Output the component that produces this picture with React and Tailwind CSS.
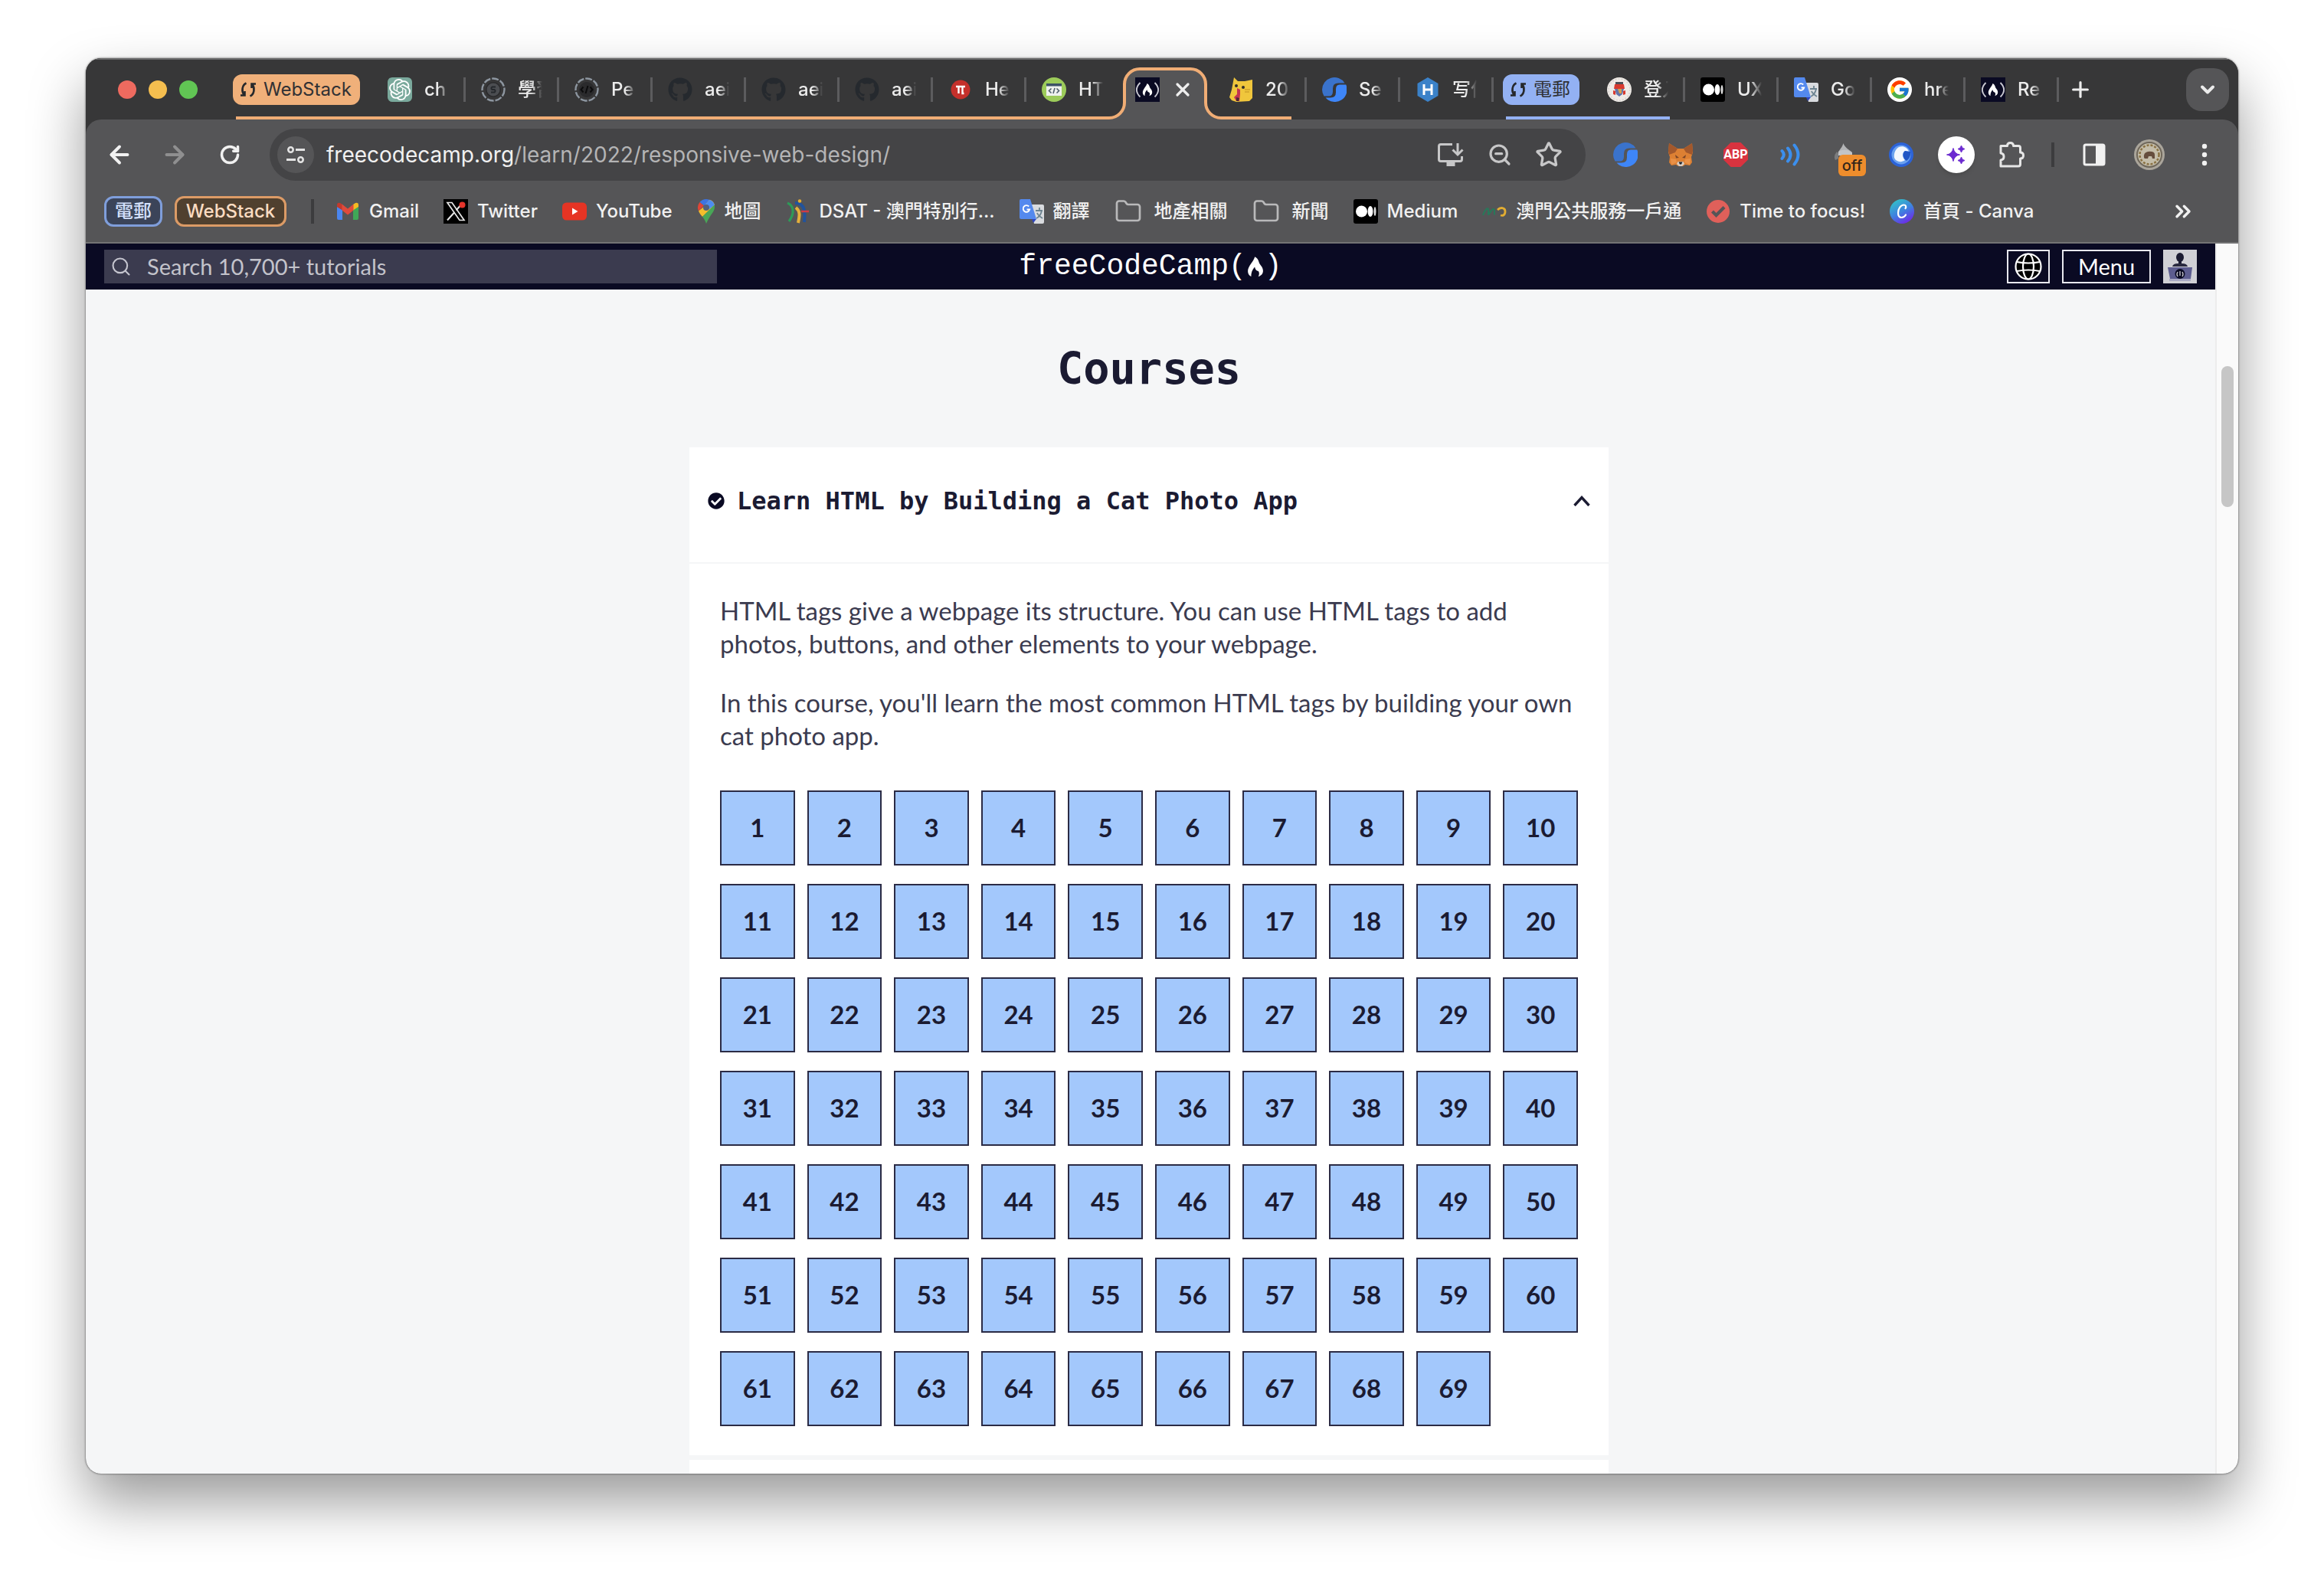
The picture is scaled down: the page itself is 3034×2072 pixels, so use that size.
import React from "react";
import { ArrowLeft, ArrowRight, RotateCw, Search, Star, Plus, X, ChevronDown, Folder, ChevronsRight, ZoomOut } from "lucide-react";
import { FaGithub, FaCheckCircle } from "react-icons/fa";
import { FcGoogle } from "react-icons/fc";
import { SiOpenai } from "react-icons/si";

/* ---------- small drawings ---------- */

const Svg = ({ size = "size-8", box = "0 0 32 32", children }) => (
  <svg viewBox={box} className={`${size} shrink-0`} fill="none" aria-hidden="true">
    {children}
  </svg>
);

const FLAME = "M15.5 8C14.5 12 9.800 15.500 9.800 19.800c0 2.200 1.200 3.700 2.700 4.400-.2-2.600.8-5.700 2.900-7.900.5 2.200 1.400 3.200 3 3.400 1 1.200.7 3.200-.1 4.500 2.300-.7 3.900-2.300 3.900-4.800 0-3.400-2.800-4.700-3.400-7.200C18.400 10.400 17.300 8.800 15.500 8z";

const ChatIcon = () => (
  <span className="flex size-8 shrink-0 items-center justify-center rounded-md bg-[#7aa99c]">
    <SiOpenai className="size-7 text-white" />
  </span>
);

const RingIcon = ({ children }) => (
  <Svg>
    <circle cx="16" cy="16" r="14.500" stroke="#8d96a0" strokeWidth="2.400" strokeDasharray="9 2" />
    <circle cx="16" cy="16" r="10" fill="#2a2a2c" />
    {children}
  </Svg>
);
const RingS = () => (
  <RingIcon>
    <circle cx="16" cy="16" r="8.500" fill="#4b4d51" />
    <path d="M19 12.500h-4.500a2 2 0 0 0 0 3.500h3a2 2 0 0 1 0 3.500H13" stroke="#25282c" strokeWidth="2" />
  </RingIcon>
);
const RingCode = () => (
  <RingIcon>
    <path d="M11.500 12.500 8.500 16l3 3.500M20.500 12.500l3 3.500-3 3.500M17.500 11l-3 10" stroke="#0c0c0d" strokeWidth="2" />
  </RingIcon>
);
const GithubIcon = () => <FaGithub className="size-8 shrink-0 text-[#25292e]" />;
const PiIcon = () => (
  <Svg>
    <circle cx="16" cy="16" r="12.500" fill="#c4302b" />
    <path d="M10 12h12M13.500 12v9M18.500 12v9h2" stroke="#fff" strokeWidth="2.400" />
  </Svg>
);
const HtmlIcon = () => (
  <Svg>
    <circle cx="16" cy="16" r="16" fill="#9ccb5a" />
    <path d="M6 8h20v16H6z" fill="#eef1ee" />
    <path d="M6 8h20v3.500H6z" fill="#3d5266" />
    <path d="m12.500 14.500-3 3 3 3M19.500 14.500l3 3-3 3M17 14l-2 7" stroke="#51606d" strokeWidth="1.600" />
  </Svg>
);
const FccIcon = () => (
  <Svg>
    <path d="M0 0h32v32H0z" fill="#0a0a23" />
    <path d="M6.500 7c-6 6-6 12.500 0 18.500M25.500 7c6 6 6 12.500 0 18.500" stroke="#c9c9d2" strokeWidth="1.800" />
    <path d={FLAME} fill="#fff" />
  </Svg>
);
const CatIcon = () => (
  <Svg>
    <path d="M7 0l5 5h9l10-2v24l-4 4-17 1-6-2-3-4 3-10z" fill="#f0c63c" />
    <circle cx="10" cy="11" r="2" fill="#33302a" />
    <circle cx="19" cy="13" r="2" fill="#33302a" />
    <path d="M11 14l4 2 0 6-1 9h-4l-3-5 4-4z" fill="#c23352" />
    <path d="M10 26l4 1-1 4h-3z" fill="#4b2a35" />
    <path d="M21 16h7M21 19h6" stroke="#cfa22a" strokeWidth="1.500" />
  </Svg>
);
const SIcon = () => (
  <Svg>
    <path d="M0 16A16 16 0 0 1 29.500 7.500H21q-7 0-7 7v4q0 6-5 6H2.500A16 16 0 0 1 0 16z" fill="#3a73cc" />
    <path d="M31.200 9.500A16 16 0 0 1 4.500 26.500H11q7 0 7-7v-4q0-6 5-6z" fill="#3e86f8" />
  </Svg>
);
const HIcon = () => (
  <Svg>
    <path d="M16 0l13.500 8v16L16 32 2.500 24V8z" fill="#3b82c9" />
    <path d="M11 9v14M21 9v14M11 16h10" stroke="#fff" strokeWidth="3" />
  </Svg>
);
const CrestIcon = () => (
  <Svg>
    <circle cx="16" cy="16" r="16" fill="#efebe6" />
    <circle cx="16" cy="16" r="14" stroke="#d8d2d0" strokeWidth="1.500" strokeDasharray="2 2" />
    <path d="M11 6h10v3H11z" fill="#4d4e58" />
    <path d="M10 9h12l1 6H9z" fill="#d8392e" />
    <path d="M10 15h12l-2 7-4 3-4-3z" fill="#6474a8" />
    <path d="M14 15h5v6h-3z" fill="#d6a04e" />
    <path d="M8 17l3 1v5l-3-1zM24 17l-3 1v5l3-1z" fill="#d8392e" />
  </Svg>
);
const MediumIcon = () => (
  <Svg>
    <rect width="32" height="32" rx="3" fill="#000" />
    <circle cx="10.500" cy="16" r="7.500" fill="#fff" />
    <ellipse cx="22" cy="16" rx="3.400" ry="7" fill="#fff" />
    <ellipse cx="28" cy="16" rx="1.500" ry="6" fill="#ddd" />
  </Svg>
);
const TranslateIcon = () => (
  <Svg>
    <path d="M13 7h17q2 0 2 2v21q0 2-2 2H19z" fill="#d9dbdf" />
    <path d="M21 15h9M26 11v4M29 15c-1 5-3 8-7 10M23 18c1 3 4 5 7 7" stroke="#6c8390" strokeWidth="1.800" />
    <path d="M2 0h12l8 26H2q-2 0-2-2V2q0-2 2-2z" fill="#5489ee" />
    <path d="M16 26h6l-4 5z" fill="#2f45c0" />
    <path d="M12.200 9.500a4.300 4.300 0 1 0 1 4H9.500" stroke="#fff" strokeWidth="1.900" />
  </Svg>
);
const GoogleIcon = () => (
  <span className="flex size-8 shrink-0 items-center justify-center rounded-full bg-white">
    <FcGoogle className="size-7" />
  </span>
);
const SavedGroup = () => (
  <Svg size="size-6" box="0 0 24 24">
    <path d="M9.500 3.500C4 6 3 14 6.500 19M2 19.500h5.500V14M14.500 20.500C20 18 21 10 17.500 5M22 4.500h-5.500V10" stroke="#26282b" strokeWidth="2.600" />
  </Svg>
);
const GmailIcon = () => (
  <Svg>
    <path d="M2 10v15q0 2 2 2h5V14z" fill="#4a86f0" />
    <path d="M30 10v15q0 2-2 2h-5V14z" fill="#3fa757" />
    <path d="M2 10V8q0-4 4-3l3 2v7.500z" fill="#c23a2d" />
    <path d="M30 10V8q0-4-4-3l-3 2v7.500z" fill="#f4bb22" />
    <path d="M8.500 6.500 16 12.500l7.500-6v8L16 20.500l-7.500-6z" fill="#e04a3c" />
  </Svg>
);
const XIcon = () => (
  <Svg>
    <path d="M0 0h32v32H0z" fill="#000" />
    <path d="M5 4.500h6L27 27.500h-6z" stroke="#e8e8e8" strokeWidth="1.700" />
    <path d="M25 5l-8.500 9.500M14 17.500l-9 10" stroke="#e8e8e8" strokeWidth="2" />
    <circle cx="24.500" cy="7.500" r="4" fill="#e5342b" />
  </Svg>
);
const YoutubeIcon = () => (
  <Svg>
    <rect y="4.500" width="32" height="23" rx="5.500" fill="#e63424" />
    <path d="M13 11.500v9l7.500-4.500z" fill="#fff" />
  </Svg>
);
const MapsIcon = () => (
  <Svg size="h-8 w-6" box="4 0 24 32">
    <path d="M16 0a11 11 0 0 0-8.500 4l6 5L20 .8A11 11 0 0 0 16 0z" fill="#3e74e0" />
    <path d="M7.500 4A11 11 0 0 0 6 15.500L13 8.500z" fill="#df4637" />
    <path d="M20 .8 12 10.500l-6 5c1 3 3 5 5 7.500L27 7.500C26 4 23.500 1.500 20 .8z" fill="#f3bd2c" />
    <path d="M20 .8c3.500.9 6 3.400 6.800 7L20 13l-7-4z" fill="#4d8cf0" />
    <path d="M26.700 7.500C28 13 25 17 22 21c-2.500 3.500-4 7-6 11-1-3-2.500-6-5-9z" fill="#48a657" />
    <circle cx="16" cy="11" r="4" fill="#53617c" />
  </Svg>
);
const DsatIcon = () => (
  <Svg>
    <path d="M2 5c8 3 10 13 2 24" stroke="#2e9a58" strokeWidth="3.200" />
    <path d="M12 5c14 0 13 14 12 25" stroke="#22539c" strokeWidth="4" />
    <path d="M13 11c6 5 5 10 3 20" stroke="#e5b03c" strokeWidth="4" />
    <circle cx="18" cy="2.500" r="2.200" fill="#e6ad31" />
    <path d="M20 16h10" stroke="#cf3c43" strokeWidth="2.500" />
  </Svg>
);
const FolderIcon = () => <Folder className="mr-1 size-9 shrink-0 text-[#b9b9ba]" strokeWidth={1.800} />;
const MoIcon = () => (
  <Svg>
    <path d="M1 21c3-8 6-10 7-8s-1 6 0 7 4-8 7-7-1 7 2 7" stroke="#27795a" strokeWidth="2" />
    <path d="M20 14c4-4 10-3 10 2s-3 6-6 5" stroke="#e2ad32" strokeWidth="2.800" />
  </Svg>
);
const CheckIcon = () => (
  <Svg>
    <circle cx="16" cy="16" r="15" fill="#e0605a" />
    <path d="M8.500 16l5 5L24 10.500" stroke="#555557" strokeWidth="4.200" />
  </Svg>
);
const CanvaIcon = () => (
  <Svg>
    <defs>
      <linearGradient id="canva" x1="6" y1="2" x2="22" y2="30" gradientUnits="userSpaceOnUse">
        <stop stopColor="#33bfc9" />
        <stop offset=".55" stopColor="#3f7fe0" />
        <stop offset="1" stopColor="#6a31e6" />
      </linearGradient>
    </defs>
    <circle cx="16" cy="16" r="16" fill="url(#canva)" />
    <path d="M20.500 12c1.500-2 .5-4.500-2-4.500-4 0-7.500 5-7.500 10.500 0 4 2 6 4.500 6 2.300 0 4.300-1.500 5.500-3.500" stroke="#fff" strokeWidth="2.200" strokeLinecap="round" />
  </Svg>
);
const TuneIcon = () => (
  <Svg size="size-7" box="0 0 28 28">
    <circle cx="7.500" cy="7.500" r="3.200" stroke="#e3e3e3" strokeWidth="2.600" />
    <path d="M14 7.500h12M2 20.500h12" stroke="#e3e3e3" strokeWidth="2.800" />
    <circle cx="20.500" cy="20.500" r="3.200" stroke="#e3e3e3" strokeWidth="2.600" />
  </Svg>
);
const InstallIcon = () => (
  <Svg size="size-9" box="0 0 36 36">
    <path d="M20 4.500H5q-2.500 0-2.500 2.500v17q0 2.500 2.500 2.500h25q2.500 0 2.500-2.500v-4" stroke="#c7c7c8" strokeWidth="3" />
    <path d="M12.500 28h11v5h-11z" fill="#c7c7c8" />
    <path d="M27 3v14M20.500 11.500 27 18l6.500-6.500" stroke="#c7c7c8" strokeWidth="3" />
  </Svg>
);
const FoxIcon = () => (
  <Svg>
    <path d="M1 1l11 7h8l11-7 1 12-2 6 1 7-3 4-6-1-3 2h-6l-3-2-6 1-3-4 1-7-2-6z" fill="#dd8033" />
    <path d="M1 1l11 7-3 5-8 3-1-5zM31 1 20 8l3 5 8 3 1-5z" fill="#a3582c" />
    <path d="M9 16l5 4-4 .5zM23 16l-5 4 4 .5z" fill="#7d4526" />
    <path d="M3 21l7 1 1 4-7 3z" fill="#ea9147" />
    <path d="M29 21l-7 1-1 4 7 3z" fill="#ea9147" />
    <path d="M12.500 25h7l1.500 3-3 3h-4l-3-3z" fill="#d9ccc0" />
    <path d="M13.500 25.500h5l-1.500 3h-2z" fill="#22242a" />
  </Svg>
);
const AbpIcon = () => (
  <span className="flex size-8 items-center justify-center bg-[#d9333f] font-['Roboto',sans-serif] text-base leading-none font-bold text-white [clip-path:polygon(30%_0,70%_0,100%_30%,100%_70%,70%_100%,30%_100%,0_70%,0_30%)]">
    ABP
  </span>
);
const SoundIcon = () => (
  <Svg>
    <path d="M4.500 11q4.500 5 0 10M12 7.500q7 8.500 0 17M20.500 3.500q10 12.500 0 25" stroke="#3b8fee" strokeWidth="4" strokeLinecap="round" />
  </Svg>
);
const OffIcon = () => (
  <span className="relative block size-8">
    <Svg>
      <path d="M12.500 1c1 4 6 8 11.500 11.500-8-2-14-2-18 1C7 9 11 7 12.500 1z" fill="#b3b4b6" />
      <path d="M6 12c5-3 12-3 18 1v4H6z" fill="#c3c4c6" />
      <path d="M4 12q-5 6-2 11l4-2v-7z" fill="#7b7c7e" />
    </Svg>
    <span className="absolute top-4 left-1.5 flex h-7 w-9 items-center justify-center rounded-md bg-[#ee8d2c] text-xl leading-none font-medium text-[#33261a]">off</span>
  </span>
);
const BirdIcon = () => (
  <Svg>
    <circle cx="16" cy="16" r="16" fill="#2c63d8" />
    <circle cx="16" cy="16" r="12.500" fill="#6aa1ef" />
    <path d="M13 6c5-2 11 0 13 6l-5-1c-4 2-4 8 0 12-5 4-12 2-14-3-1-6 2-12 6-14z" fill="#f3f7fd" />
    <path d="M21 11l7 1c1 5-2 10-5 12-5-3-6-10-2-13z" fill="#2055c4" />
  </Svg>
);
const SparkIcon = () => (
  <span className="flex size-12 items-center justify-center rounded-full bg-white shadow-md">
    <Svg size="size-7" box="0 0 28 28">
      <path d="M10 5.500q1.500 7.500 8.500 8.500-7 1-8.500 8.500Q8.500 15 1.500 14 8.500 13 10 5.500zM20.500 2q.8 4 4.500 4.500-3.700.5-4.500 4.500-.8-4-4.500-4.500 3.700-.5 4.500-4.500zM20.500 17q.8 4 4.500 4.500-3.700.5-4.500 4.500-.8-4-4.500-4.500 3.700-.5 4.500-4.500z" fill="#6c2bd0" stroke="#6c2bd0" strokeWidth="1" />
    </Svg>
  </span>
);
const PuzzleIcon = () => (
  <Svg size="size-9" box="0 0 36 36">
    <path d="M4 6.500h8.500q0-4 4-4t4 4H27q2.500 0 2.500 2.500v6q4 0 4 4t-4 4v7.500q0 2.500-2.500 2.500H4V25q4-.5 4-4.500T4 16z" stroke="#e6e6e6" strokeWidth="3" strokeLinejoin="round" />
  </Svg>
);
const SidePanelIcon = () => (
  <Svg>
    <rect x="3" y="3" width="26" height="26" rx="2" stroke="#f1f1f1" strokeWidth="3" />
    <path d="M18 3h11v26H18z" fill="#f1f1f1" />
  </Svg>
);
const ProfileIcon = () => (
  <Svg size="size-10" box="0 0 40 40">
    <circle cx="20" cy="20" r="20" fill="#aaa59b" />
    <circle cx="20" cy="20" r="16" fill="#c4bda9" stroke="#6f675a" strokeWidth="2" />
    <circle cx="20" cy="20" r="12.500" stroke="#8a7244" strokeWidth="2.500" strokeDasharray="3 2" />
    <path d="M13 24q-1-7 5-8 9-1 9 4v5h-3l-1-3h-4l-1 3h-4z" fill="#664e3d" />
  </Svg>
);
const DotsIcon = () => (
  <Svg>
    <circle cx="16" cy="5" r="3.200" fill="#f1f1f1" />
    <circle cx="16" cy="16" r="3.200" fill="#f1f1f1" />
    <circle cx="16" cy="27" r="3.200" fill="#f1f1f1" />
  </Svg>
);

/* ---------- tab strip ---------- */

const Tab = ({ icon: Icon, title, divider = true }) => (
  <button className="flex h-full w-[122px] shrink-0 items-center pl-5">
    <Icon />
    <span className="ml-4 w-8 overflow-hidden text-left whitespace-nowrap [mask-image:linear-gradient(to_right,#000_55%,transparent)]">{title}</span>
    {divider && <span className="ml-auto h-8 w-[3px] bg-[#5c5c5e]" />}
  </button>
);

const ActiveTab = () => (
  <div className="relative flex h-full w-[122px] shrink-0 items-center pl-5">
    <svg viewBox="0 0 146 80" className="absolute bottom-0 -left-3.5 h-20 w-[146px]" fill="none" aria-hidden="true">
      <path d="M0 78A20 20 0 0 0 20 58V34A20 20 0 0 1 40 14H106A20 20 0 0 1 126 34V58A20 20 0 0 0 146 78V80H0z" fill="#555557" />
      <path d="M0 78A20 20 0 0 0 20 58V34A20 20 0 0 1 40 14H106A20 20 0 0 1 126 34V58A20 20 0 0 0 146 78" stroke="#f0ad75" strokeWidth="4" />
    </svg>
    <span className="relative"><FccIcon /></span>
    <button aria-label="Close tab" className="relative ml-4 flex size-7 items-center justify-center">
      <X className="size-7 text-[#eeeeee]" strokeWidth={2.800} />
    </button>
  </div>
);

const groupOne = [
  [ChatIcon, "ch"], [RingS, "學習"], [RingCode, "Pe"], [GithubIcon, "aei"], [GithubIcon, "aei"], [GithubIcon, "aei"], [PiIcon, "He"],
];

const TabStrip = () => (
  <div className="flex h-20 shrink-0 items-center border-t-2 border-[#69696a] bg-[#373738] pr-3 pl-[42px] text-2xl font-medium text-[#ececec]">
    <div className="flex gap-4">
      <span className="size-6 rounded-full bg-[#ee6a5f]" />
      <span className="size-6 rounded-full bg-[#f5be4f]" />
      <span className="size-6 rounded-full bg-[#61c554]" />
    </div>
    <div className="relative ml-[46px] flex h-full items-center">
      <span className="absolute right-5 bottom-0 left-1 h-1 bg-[#f0ad75]" />
      <button className="mr-4 flex h-10 w-[166px] items-center gap-2 rounded-xl bg-[#f0b07a] pl-2 font-normal text-[#303134]">
        <SavedGroup />
        WebStack
      </button>
      {groupOne.map(([icon, title], i) => <Tab key={i} icon={icon} title={title} />)}
      <Tab icon={HtmlIcon} title="HT" divider={false} />
      <ActiveTab />
      <Tab icon={CatIcon} title="20" />
    </div>
    <Tab icon={SIcon} title="Se" />
    <Tab icon={HIcon} title="写作" />
    <div className="relative ml-3 flex h-full items-center">
      <span className="absolute right-5 bottom-0 left-1 h-1 bg-[#93b1f3]" />
      <button className="mr-4 flex h-10 w-[100px] items-center gap-2 rounded-xl bg-[#93b1f3] pl-2 font-normal text-[#303134]">
        <SavedGroup />
        <span className="whitespace-nowrap">電郵</span>
      </button>
      <Tab icon={CrestIcon} title="登入" />
    </div>
    <Tab icon={MediumIcon} title="UX" />
    <Tab icon={TranslateIcon} title="Go" />
    <Tab icon={GoogleIcon} title="hre" />
    <Tab icon={FccIcon} title="Re" />
    <button aria-label="New tab" className="ml-3 flex size-8 items-center justify-center">
      <Plus className="size-8" strokeWidth={2.400} />
    </button>
    <button aria-label="Search tabs" className="ml-auto flex size-14 shrink-0 items-center justify-center rounded-[20px] bg-[#555557]">
      <ChevronDown className="size-7" strokeWidth={3.400} />
    </button>
  </div>
);

/* ---------- toolbar ---------- */

const ToolButton = ({ label, children }) => (
  <button aria-label={label} className="flex h-12 w-[72px] shrink-0 items-center justify-center">{children}</button>
);

const extensions = [
  ["Site tools", SIcon], ["Wallet", FoxIcon], ["Ad blocker", AbpIcon], ["Read aloud", SoundIcon],
  ["Blocker off", OffIcon], ["Bird", BirdIcon], ["Assistant", SparkIcon], ["Extensions", PuzzleIcon],
];

const Toolbar = () => (
  <div className="flex h-[92px] items-center px-2">
    <ToolButton label="Back"><ArrowLeft className="size-9 text-[#f1f1f1]" strokeWidth={2.600} /></ToolButton>
    <ToolButton label="Forward"><ArrowRight className="size-9 text-[#8f8f90]" strokeWidth={2.600} /></ToolButton>
    <ToolButton label="Reload"><RotateCw className="size-7 text-[#f1f1f1]" strokeWidth={3} /></ToolButton>
    <div className="mx-4 flex h-[68px] flex-1 items-center rounded-full bg-[#444446] pr-4 pl-2.5">
      <button aria-label="Site information" className="flex size-12 items-center justify-center rounded-full bg-[#555557]"><TuneIcon /></button>
      <span className="ml-4 flex-1 text-[28px] leading-9 whitespace-nowrap text-[#b4b4b5]">
        <span className="text-[#f1f1f1]">freecodecamp.org</span>/learn/2022/responsive-web-design/
      </span>
      <button aria-label="Install app" className="flex size-16 items-center justify-center"><InstallIcon /></button>
      <button aria-label="Zoom" className="flex size-16 items-center justify-center"><ZoomOut className="size-8 text-[#c7c7c8]" strokeWidth={2.400} /></button>
      <button aria-label="Bookmark" className="flex size-16 items-center justify-center"><Star className="size-9 text-[#c7c7c8]" strokeWidth={2.200} /></button>
    </div>
    {extensions.map(([label, Icon]) => <ToolButton key={label} label={label}><Icon /></ToolButton>)}
    <span className="mx-4 h-8 w-1 bg-[#3c3c3e]" />
    <ToolButton label="Side panel"><SidePanelIcon /></ToolButton>
    <ToolButton label="Profile"><ProfileIcon /></ToolButton>
    <ToolButton label="Menu"><DotsIcon /></ToolButton>
  </div>
);

const bookmarks = [
  [GmailIcon, "Gmail"], [XIcon, "Twitter"], [YoutubeIcon, "YouTube"], [MapsIcon, "地圖"], [DsatIcon, "DSAT - 澳門特別行..."],
  [TranslateIcon, "翻譯"], [FolderIcon, "地產相關"], [FolderIcon, "新聞"], [MediumIcon, "Medium"], [MoIcon, "澳門公共服務一戶通"],
  [CheckIcon, "Time to focus!"], [CanvaIcon, "首頁 - Canva"],
];

const BookmarksBar = () => (
  <nav className="flex h-14 items-center pr-14 pl-6 text-2xl font-medium whitespace-nowrap text-[#f1f1f1]">
    <button className="h-10 w-[76px] rounded-xl border-[3px] border-[#7f9edb] bg-[#3b4459] leading-8 text-[#d3e0fb]">電郵</button>
    <button className="ml-4 h-10 w-[146px] rounded-xl border-[3px] border-[#dc9b66] bg-[#50402f] leading-8 text-[#fbdcc2]">WebStack</button>
    <span className="mr-7 ml-8 h-8 w-1 bg-[#3c3c3e]" />
    <div className="flex gap-8">
      {bookmarks.map(([Icon, label]) => (
        <a key={label} href="#" className="flex items-center gap-3">
          <Icon />
          {label}
        </a>
      ))}
    </div>
    <button aria-label="More bookmarks" className="ml-auto"><ChevronsRight className="size-8" strokeWidth={2.600} /></button>
  </nav>
);

/* ---------- page ---------- */

const GlobeIcon = () => (
  <Svg size="size-9" box="0 0 36 36">
    <circle cx="18" cy="18" r="16.500" fill="#000" stroke="#fff" strokeWidth="2.200" />
    <ellipse cx="18" cy="18" rx="7" ry="16.500" stroke="#fff" strokeWidth="2.200" />
    <path d="M3 12q15 3 30 0M3 24q15-3 30 0" stroke="#fff" strokeWidth="2.200" />
  </Svg>
);
const CamperIcon = () => (
  <Svg size="size-11" box="0 0 44 44">
    <path d="M0 0h44v44H0z" fill="#d0d0d5" />
    <ellipse cx="22" cy="10" rx="5" ry="6" fill="#1b1b32" />
    <path d="M20 15h4v4h-4z" fill="#1b1b32" />
    <path d="M12 22q1-4 7-4h6q6 0 7 4z" fill="#2a2a40" />
    <path d="M6 23h32l-2 15H9z" fill="#5d5d90" />
    <path d="M8 38h28v3H8z" fill="#a9a9c4" />
    <circle cx="22" cy="31.500" r="6.500" fill="#0a0a23" />
    <path d="M19 29q-2 3 0 6M25 29q2 3 0 6M22 28v6" stroke="#d0d0d5" strokeWidth="1.300" />
  </Svg>
);

const SiteNav = () => (
  <header className="grid h-[60px] shrink-0 grid-cols-[1fr_auto_1fr] items-center bg-[#0a0a23] px-6 text-white">
    <label className="flex h-11 w-[800px] items-center bg-[#3b3b4f] pl-2">
      <Search className="size-7 text-[#c5c5cf]" strokeWidth={1.800} />
      <input aria-label="Search tutorials" placeholder="Search 10,700+ tutorials" className="ml-5 flex-1 bg-transparent text-[29px] leading-9 outline-none placeholder:text-[#c3c3cb]" />
    </label>
    <a href="#" className="flex items-center font-['Liberation_Mono',monospace] text-[38px] leading-[44px]">
      freeCodeCamp(
      <svg viewBox="8.500 6 15 20" className="h-9 w-6" fill="#fff" aria-hidden="true"><path d={FLAME} /></svg>
      )
    </a>
    <div className="flex justify-end gap-4">
      <button aria-label="Language" className="flex h-11 w-14 items-center justify-center border-2 border-[#e8e8ee]"><GlobeIcon /></button>
      <button className="h-11 w-[116px] border-2 border-[#e8e8ee] text-[29px] leading-9">Menu</button>
      <button aria-label="Account"><CamperIcon /></button>
    </div>
  </header>
);

const steps = Array.from({ length: 69 }, (_, i) => i + 1);

const Courses = () => (
  <main className="flex-1 pr-7 pl-6">
    <h2 className="py-[69px] text-center font-['DejaVu_Sans_Mono',monospace] text-[57px] leading-[68px] font-bold">Courses</h2>
    <section className="mx-auto max-w-[1200px]">
      <div className="bg-white">
        <h3 className="border-b-2 border-[#f5f6f7]">
          <button aria-expanded="true" className="flex w-full items-center gap-4 px-6 pt-[46px] pb-14 text-left font-['DejaVu_Sans_Mono',monospace] text-[32px] leading-[48px] font-bold">
            <FaCheckCircle className="size-[22px] text-[#0a0a23]" />
            <span className="flex-1">Learn HTML by Building a Cat Photo App</span>
            <svg viewBox="0 0 22 14" className="h-3.5 w-[22px]" fill="none" aria-hidden="true"><path d="M1.500 13 11 2.500 20.500 13" stroke="#1b1b32" strokeWidth="3.400" /></svg>
          </button>
        </h3>
        <div className="px-10 pt-10 pb-[38px]">
          <p className="text-[33px] leading-[43px] text-[#3b3b4f]">
            HTML tags give a webpage its structure. You can use HTML tags to add photos, buttons, and other elements to your webpage.
          </p>
          <p className="mt-[34px] text-[33px] leading-[43px] text-[#3b3b4f]">
            In this course, you'll learn the most common HTML tags by building your own cat photo app.
          </p>
          <ol className="mt-[50px] grid grid-cols-10 gap-x-4 gap-y-6">
            {steps.map((n) => (
              <li key={n}>
                <a href="#" className="flex h-[98px] items-center justify-center border-2 border-[#2b2b45] bg-[#a3c8fc] pb-0.5 text-[33px] leading-[43px] font-bold text-[#1b1b32]">{n}</a>
              </li>
            ))}
          </ol>
        </div>
      </div>
      <div className="mt-1.5 h-40 bg-white" />
    </section>
  </main>
);

export default function App() {
  return (
    <div className="flex h-screen bg-white px-28 pt-[76px] pb-[148px] font-['Inter','Noto_Sans_CJK_TC',sans-serif]">
      <div className="flex min-w-0 flex-1 flex-col overflow-hidden rounded-[20px] bg-[#373738] shadow-[0_0_2px_1px_rgba(0,0,0,0.3),0_36px_72px_rgba(0,0,0,0.4)]">
        <TabStrip />
        <div className="h-[162px] shrink-0 rounded-t-[20px] border-b-2 border-[#737374] bg-[#555557]">
          <Toolbar />
          <BookmarksBar />
        </div>
        <div className="flex min-h-0 flex-1">
          <div className="flex min-w-0 flex-1 flex-col overflow-hidden bg-[#f5f6f7] font-['Lato',sans-serif] text-[#1b1b32]">
            <SiteNav />
            <Courses />
          </div>
          <div className="flex w-[30px] justify-center border-l-2 border-[#ececec] bg-[#fafafa] pt-40">
            <span className="h-[184px] w-4 rounded-full bg-[#c6c6c6]" />
          </div>
        </div>
      </div>
    </div>
  );
}
